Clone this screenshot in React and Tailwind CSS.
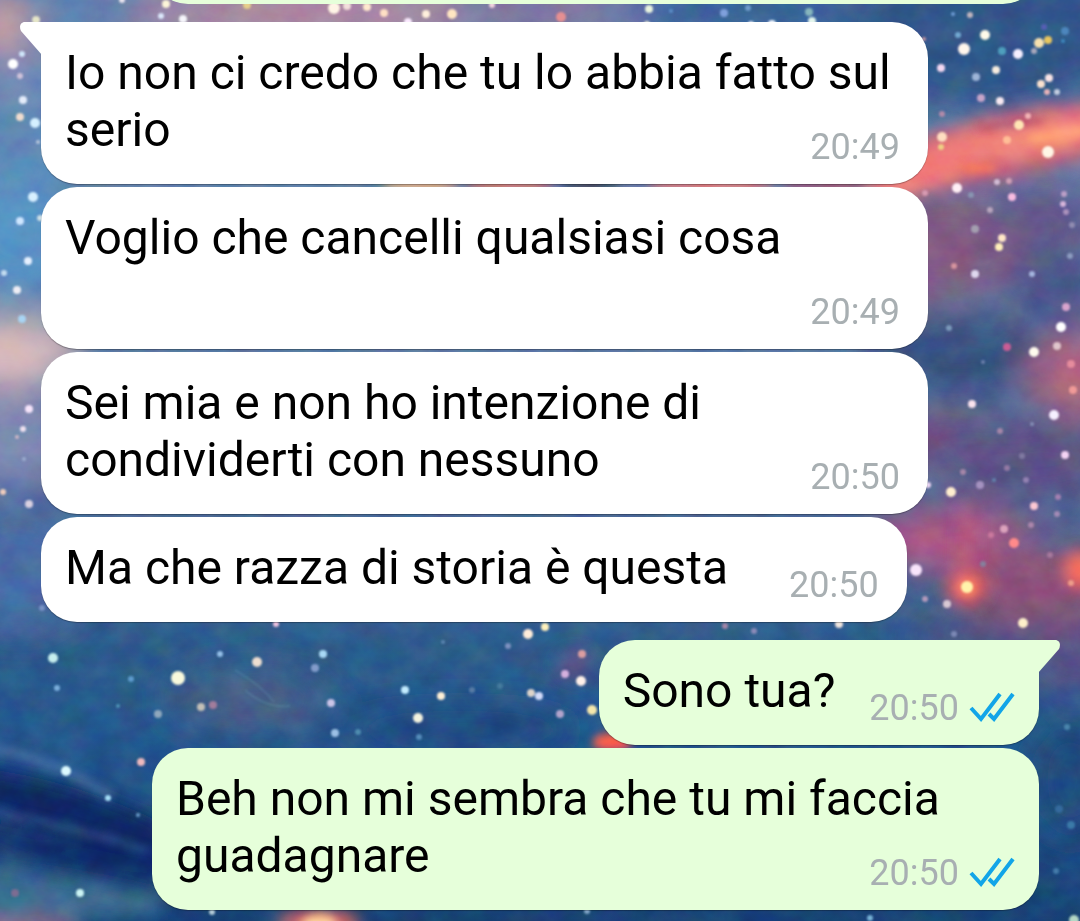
import React from 'react';

const messages = [
  { id: 1, text: 'Io non ci credo che tu lo abbia fatto sul serio', time: '20:49', tail: true },
  { id: 2, text: 'Voglio che cancelli qualsiasi cosa', time: '20:49' },
  { id: 3, text: 'Sei mia e non ho intenzione di condividerti con nessuno', time: '20:50' },
  { id: 4, text: 'Ma che razza di storia è questa', time: '20:50' },
  { id: 5, text: 'Sono tua?', time: '20:50', mine: true, tail: true },
  { id: 6, text: 'Beh non mi sembra che tu mi faccia guadagnare', time: '20:50', mine: true },
];

// x, y, radius, colour
const stars = [
  [122, 0, 3, '#e8e4ee'], [166, 4, 4, '#fdf5d8'], [161, 16, 3, '#dbe8fb'], [183, 19, 4, '#f6f6fb'], [36, 20, 4, '#e5e6c8'],
  [247, 5, 4, '#e6cf8a'], [334, 8, 6, '#fff4e6'], [347, 6, 4, '#f3dfdc'], [367, 7, 4, '#ffe9cf'], [384, 13, 4, '#ffe0c4'],
  [408, 22, 4, '#fbeaff'], [426, 14, 4, '#fff0dc'], [452, 14, 5, '#ffe6c2'], [492, 5, 3, '#f3d3df'], [561, 17, 5, '#e58f92'],
  [649, 9, 4, '#e9f3df'], [647, 24, 3, '#e6ead2'], [671, 11, 2, '#5b8fc9'], [724, 13, 4, '#7fa0dc'], [748, 8, 3, '#6f9ccc'],
  [751, 24, 3, '#dfe3f3'], [772, 24, 4, '#f0f6ff'], [809, 12, 4, '#86b6bd'], [812, 21, 4, '#e3f5ec'],
  [22, 54, 3, '#cfe6fa'], [13, 64, 5, '#fff'], [20, 76, 3, '#cfc2da'], [23, 100, 4, '#e4ecfa'], [20, 117, 4, '#f1ddcf'],
  [35, 123, 5, '#d5f0ff'], [38, 142, 2, '#b9c7dc'], [33, 197, 5, '#d8f0ff'], [20, 221, 4, '#cfe6ff'], [40, 218, 3, '#cfe0e6'],
  [28, 261, 4, '#e6f0ff'], [4, 273, 3, '#c3dcf0'], [17, 290, 4, '#efeef4'], [22, 319, 4, '#a8d4f3'], [29, 409, 4, '#f6e4fa'],
  [23, 429, 3, '#f0e2f0'], [17, 437, 2, '#cfb7c6'], [24, 459, 2, '#9eaed0'], [3, 492, 3, '#f0cdbd'], [29, 504, 4, '#d9d0e1'],
  [953, 14, 2, '#6f9ed6'], [970, 15, 3, '#c0b5be'], [985, 35, 5, '#fffbea'], [964, 49, 6, '#fff6ec'], [958, 35, 3, '#72a9d2'],
  [1018, 54, 5, '#f5efff'], [1039, 43, 5, '#f7e1af'], [1048, 40, 4, '#e8c65f'], [1034, 51, 3, '#a9a8bc'], [1065, 31, 4, '#4e86bd'],
  [1044, 27, 3, '#565fb4'], [1063, 41, 2, '#3f8abf'],
  [941, 68, 4, '#f4d8f2'], [996, 70, 4, '#f8eee0'], [1002, 51, 4, '#4f9fbd'], [976, 77, 4, '#9eb5d8'], [1049, 78, 4, '#f9e4e6'],
  [1041, 84, 4, '#fae2cf'], [1057, 92, 3, '#c4cee0'], [1047, 92, 3, '#e7b3b9'], [981, 98, 4, '#c6a4c8'], [1000, 101, 4, '#f8e9f2'],
  [942, 114, 3, '#b18aa9'], [924, 39, 2, '#c896a0'], [1028, 116, 3, '#f2b3b5'], [1019, 125, 5, '#ffe6b5'], [942, 137, 5, '#ffdec1'],
  [941, 147, 3, '#eed084'], [1007, 140, 4, '#ffbe97'], [1048, 152, 6, '#fff6e6'], [957, 188, 5, '#fff0f6'], [997, 182, 3, '#d2bdd5'],
  [1009, 181, 3, '#cf9fb5'], [1012, 197, 4, '#f8bce0'], [925, 193, 3, '#d79bb2'], [971, 195, 3, '#8894b1'], [990, 210, 3, '#b7a5bd'],
  [1064, 194, 3, '#bca0c7'], [1063, 204, 3, '#d7b5da'], [1066, 212, 3, '#ab91bb'], [975, 229, 4, '#a49fb0'], [1002, 238, 4, '#ffe7c6'],
  [999, 247, 4, '#fff0ba'], [1072, 225, 3, '#8f8bb0'], [1070, 256, 3, '#8b9cc0'], [954, 266, 3, '#d6949f'], [975, 274, 4, '#dfd8ef'],
  [1032, 274, 3, '#a5b5df'], [1066, 307, 4, '#d9a4cd'], [949, 328, 3, '#7b9aba'], [1061, 327, 5, '#fff'], [1034, 352, 5, '#fffbee'],
  [1057, 346, 4, '#e0c6cc'], [1007, 347, 4, '#c95d95'], [1071, 364, 4, '#e58c9d'], [1073, 390, 4, '#f09a98'], [983, 362, 2, '#6d82ac'],
  [972, 404, 4, '#fbe3ee'], [1054, 415, 5, '#f6f0ff'], [1032, 424, 2, '#8590b8'], [1000, 431, 3, '#a586a8'], [1065, 455, 4, '#f4d4f4'],
  [1022, 456, 3, '#7f79a1'], [963, 472, 3, '#a586a8'], [1007, 468, 3, '#9479a4'], [1026, 480, 3, '#9382b2'], [928, 485, 3, '#eed8f7'],
  [951, 492, 5, '#ffeecf'], [980, 485, 4, '#a592c0'], [994, 480, 2, '#6283ad'], [1034, 506, 4, '#fbc8d3'], [1058, 497, 3, '#a480b1'],
  [1057, 514, 3, '#a48ab6'], [1031, 525, 3, '#ac86ac'], [1004, 529, 4, '#dca3bd'], [991, 535, 3, '#ca789e'], [1014, 543, 5, '#ff8a8a'],
  [983, 564, 3, '#86809c'], [916, 570, 6, '#f8e4fb'], [967, 587, 6, '#fff3ab'], [947, 604, 4, '#d8c9d4'], [925, 599, 3, '#b39abb'],
  [1023, 623, 5, '#fff0ca'], [1071, 583, 3, '#ee9e8a'], [1050, 555, 3, '#a6789c'], [839, 624, 4, '#f1e6df'],
  [954, 634, 3, '#7d88b5'], [725, 626, 3, '#a586a8'], [754, 631, 3, '#8c8ab8'],
  [42, 608, 3, '#7792c4'], [53, 658, 5, '#c6eeee'], [57, 688, 3, '#7baedc'], [131, 679, 3, '#5e9bce'], [178, 678, 7, '#f8f9dc'],
  [220, 654, 3, '#94bfe8'], [257, 662, 5, '#efdfd1'], [276, 624, 3, '#f0c3e1'], [315, 668, 4, '#839cca'], [201, 707, 4, '#c4c0b7'],
  [213, 705, 4, '#a17d9c'], [158, 714, 4, '#8fa8bd'], [118, 706, 2, '#4f96b7'], [141, 762, 4, '#eeb9be'], [66, 771, 5, '#dcfaff'],
  [108, 798, 3, '#a6def7'], [138, 815, 2, '#6a9cca'], [80, 893, 4, '#ccf4f4'], [212, 912, 3, '#b5cdd9'], [15, 893, 4, '#7d6d92'],
  [323, 654, 4, '#a9d9f5'], [331, 703, 4, '#ccc5e8'], [335, 733, 4, '#9cc0e5'], [358, 732, 3, '#4f8baf'],
  [405, 690, 4, '#c3ecff'], [441, 696, 4, '#fff0d6'], [418, 718, 5, '#f4f3df'], [419, 737, 3, '#548cba'], [443, 642, 2, '#5b87b3'],
  [508, 646, 3, '#7e91c1'], [472, 690, 3, '#587ca5'], [500, 686, 3, '#457b9d'], [528, 634, 5, '#ffedda'], [545, 627, 4, '#fff2bd'],
  [582, 654, 4, '#dc9ea1'], [565, 674, 4, '#d4b0de'], [581, 681, 5, '#fff1e9'], [531, 693, 4, '#ddd4ca'], [539, 696, 4, '#d3dcfb'],
  [560, 714, 4, '#b3a4cc'], [592, 710, 5, '#f5e7ab'], [1067, 727, 3, '#4b85ad'], [1059, 809, 4, '#356a9d'], [1071, 825, 4, '#3b7aa8'],
  [1056, 871, 3, '#457caa'], [1074, 920, 5, '#b4d8c4'], [870, 918, 3, '#77b3d6'], [587, 911, 3, '#83a7ca'],
];

function Cloud({ cx, cy, rx, ry, fill, turn = 0, opacity = 1 }) {
  return <ellipse cx={cx} cy={cy} rx={rx} ry={ry} fill={fill} opacity={opacity} transform={`rotate(${turn} ${cx} ${cy})`} />;
}

function Galaxy() {
  return (
    <svg className="fixed inset-0 h-full w-full" viewBox="0 0 1080 921" preserveAspectRatio="xMidYMid slice" aria-hidden="true">
      <defs>
        <linearGradient id="sky" x1="0" y1="0" x2="0" y2="1">
          <stop offset="0" stopColor="#5e7fae" />
          <stop offset="0.3" stopColor="#5f7fa8" />
          <stop offset="0.6" stopColor="#456594" />
          <stop offset="0.7" stopColor="#2a5a8a" />
          <stop offset="0.8" stopColor="#22558c" />
          <stop offset="1" stopColor="#164073" />
        </linearGradient>
        <filter id="soft" x="-50%" y="-50%" width="200%" height="200%"><feGaussianBlur stdDeviation="18" /></filter>
        <filter id="mid" x="-50%" y="-50%" width="200%" height="200%"><feGaussianBlur stdDeviation="8" /></filter>
        <filter id="fine" x="-50%" y="-50%" width="200%" height="200%"><feGaussianBlur stdDeviation="4" /></filter>
        <filter id="glow" x="-5%" y="-5%" width="110%" height="110%"><feGaussianBlur stdDeviation="1.3" /></filter>
        <filter id="dust" x="0" y="0" width="100%" height="100%" colorInterpolationFilters="sRGB">
          <feTurbulence type="fractalNoise" baseFrequency="0.035 0.045" numOctaves="5" seed="8" />
          <feColorMatrix values="1.4 0 0 0 -0.1  0 1.4 0 0 -0.1  0 0 1.4 0 -0.1  0 0 0 0 1" />
        </filter>
      </defs>
      <rect width="1080" height="921" fill="url(#sky)" />
      <g filter="url(#soft)">
        <Cloud cx={0} cy={25} rx={34} ry={30} fill="#cf9ba5" />
        <Cloud cx={25} cy={90} rx={30} ry={40} fill="#7688b6" />
        <Cloud cx={20} cy={150} rx={60} ry={50} fill="#5b87b5" />
        <Cloud cx={15} cy={235} rx={60} ry={60} fill="#5592c4" />
        <Cloud cx={5} cy={352} rx={75} ry={36} fill="#dcbabc" />
        <Cloud cx={10} cy={440} rx={60} ry={45} fill="#8087b3" />
        <Cloud cx={20} cy={570} rx={70} ry={60} fill="#476aa4" />
        <Cloud cx={310} cy={12} rx={190} ry={26} fill="#b78a9f" />
        <Cloud cx={550} cy={10} rx={90} ry={26} fill="#80749c" />
        <Cloud cx={760} cy={10} rx={130} ry={26} fill="#2f5b96" />
        <Cloud cx={990} cy={30} rx={150} ry={85} fill="#2f5488" />
        <Cloud cx={940} cy={245} rx={90} ry={55} fill="#80597f" />
        <Cloud cx={1040} cy={220} rx={60} ry={35} fill="#625486" />
        <Cloud cx={1060} cy={290} rx={50} ry={40} fill="#44548a" />
        <Cloud cx={960} cy={355} rx={90} ry={42} fill="#364f7e" />
        <Cloud cx={1080} cy={375} rx={50} ry={42} fill="#b0607c" />
        <Cloud cx={940} cy={440} rx={60} ry={26} fill="#764c7a" />
        <Cloud cx={1030} cy={460} rx={90} ry={42} fill="#584f82" />
        <Cloud cx={950} cy={540} rx={80} ry={32} fill="#b05282" />
        <Cloud cx={1040} cy={585} rx={90} ry={42} fill="#8a5178" />
        <Cloud cx={1000} cy={636} rx={100} ry={14} fill="#584f7e" />
        <Cloud cx={1075} cy={660} rx={45} ry={36} fill="#565084" />
        <Cloud cx={1070} cy={780} rx={40} ry={60} fill="#1d4a7c" />
        <Cloud cx={250} cy={700} rx={80} ry={26} fill="#4b5f84" />
        <Cloud cx={460} cy={730} rx={120} ry={20} fill="#1b457c" />
      </g>
      <g filter="url(#mid)">
        <Cloud cx={1010} cy={145} rx={145} ry={34} turn={-12} fill="#b85c7c" />
        <Cloud cx={1025} cy={139} rx={120} ry={20} turn={-10} fill="#f08078" />
        <Cloud cx={935} cy={167} rx={50} ry={22} turn={-24} fill="#f07878" />
        <Cloud cx={967} cy={587} rx={20} ry={18} fill="#f65c5a" opacity={0.85} />
        <Cloud cx={1080} cy={570} rx={16} ry={18} fill="#ff6a58" />
        <Cloud cx={967} cy={545} rx={6} ry={45} fill="#cf5a78" opacity={0.7} />
        <Cloud cx={319} cy={922} rx={42} ry={10} fill="#ff6f60" />
        <Cloud cx={575} cy={665} rx={20} ry={16} fill="#6b4c80" opacity={0.7} />
        <path d="M-20 768 Q70 778 160 822 L170 878 Q80 850 -20 808Z" fill="#0a2762" />
        <path d="M-20 820 Q70 850 150 858 L160 885 Q60 875 -20 838Z" fill="#0f2c68" />
        <path d="M-20 862 Q70 878 160 896 L160 915 L-20 921Z" fill="#37698f" />
        <Cloud cx={20} cy={924} rx={60} ry={8} fill="#8a6d8b" />
      </g>
      <g filter="url(#fine)">
        <Cloud cx={980} cy={168} rx={18} ry={5} fill="#fb7a58" />
        <Cloud cx={1060} cy={134} rx={36} ry={7} turn={-8} fill="#ffa078" />
        <Cloud cx={1010} cy={124} rx={36} ry={3} turn={-6} fill="#a84b68" />
        <Cloud cx={967} cy={587} rx={9} ry={9} fill="#ff8858" />
        <Cloud cx={319} cy={924} rx={18} ry={9} fill="#ffd598" />
        <Cloud cx={612} cy={742} rx={20} ry={9} fill="#ff5e4c" />
        <Cloud cx={420} cy={185} rx={40} ry={6} fill="#e8b184" />
        <Cloud cx={510} cy={185} rx={45} ry={6} fill="#d77773" />
        <Cloud cx={590} cy={185} rx={30} ry={6} fill="#45455c" />
        <Cloud cx={710} cy={185} rx={65} ry={6} fill="#ec7c7c" />
        <Cloud cx={830} cy={185} rx={50} ry={6} fill="#a0527a" />
        <Cloud cx={890} cy={185} rx={28} ry={6} fill="#f07a78" />
      </g>
      <path d="M-10 748 Q50 758 112 796" stroke="#6f92c0" strokeWidth="9" fill="none" opacity="0.4" filter="url(#fine)" />
      <path d="M-10 810 Q70 825 150 852" stroke="#3c62a0" strokeWidth="6" fill="none" opacity="0.6" filter="url(#fine)" />
      <path d="M245 690 Q265 708 290 706 M235 670 Q262 686 274 702" stroke="#6291ac" strokeWidth="2" fill="none" opacity="0.35" filter="url(#glow)" />
      <rect className="mix-blend-soft-light" width="1080" height="921" filter="url(#dust)" opacity="0.2" />
      <g filter="url(#glow)">
        {stars.map(([x, y, r, fill]) => (
          <circle key={`${x}-${y}`} cx={x} cy={y} r={r} fill={fill} />
        ))}
      </g>
    </svg>
  );
}

function Ticks() {
  return (
    <svg className="h-8 w-12" viewBox="0 0 48 32" fill="none" stroke="#12a5e8" strokeWidth="4" role="img" aria-label="Letto">
      <path d="M2 16 L12 27 L31 2" />
      <path d="M20 22 L25 27 L44 2" />
    </svg>
  );
}

function Tail({ mine }) {
  return (
    <svg
      className={mine ? 'absolute top-0 -right-[21px] h-8 w-[22px] -scale-x-100' : 'absolute top-0 -left-[21px] h-8 w-[22px]'}
      viewBox="0 0 22 32"
      aria-hidden="true"
    >
      <path d="M22 0 H5 C0 0 -1 5 1 9 L22 33Z" fill={mine ? '#e6ffda' : '#fff'} />
    </svg>
  );
}

function Message({ text, time, mine, tail }) {
  const side = mine ? 'self-end bg-[#e6ffda] pr-[22px]' : 'self-start bg-white pr-7';
  const corner = !tail ? '' : mine ? 'rounded-tr-none mt-[15px]' : 'rounded-tl-none';

  return (
    <li className={`relative w-fit max-w-[min(100%,887px)] rounded-[36px] pt-[22px] pb-[19px] pl-6 shadow-[0_1px_1px_rgba(0,0,0,0.3)] ${side} ${corner}`}>
      {tail && <Tail mine={mine} />}
      {/* the time floats beside the last line, or drops below it when there is no room */}
      <div className="flow-root text-[48px] leading-[57px] text-black">
        {text}
        <div className={`float-right mt-7 flex items-center gap-[10px] text-[36px] leading-[36px] text-[#a8afb2] ${mine ? 'ml-[34px]' : 'ml-[61px]'}`}>
          <time>{time}</time>
          {mine && <Ticks />}
        </div>
      </div>
    </li>
  );
}

export default function App() {
  return (
    <main className="relative min-h-screen overflow-hidden font-['Roboto',sans-serif]">
      <Galaxy />
      <div className="relative px-[41px]">
        {/* end of the previous message, scrolled out of view */}
        <div className="ml-auto h-1 w-[887px] max-w-full overflow-hidden">
          <div className="-mt-[68px] h-[72px] rounded-[36px] bg-[#e6ffda]" />
        </div>
        <ul className="mt-[18px] flex flex-col gap-[3px]">
          {messages.map(({ id, ...message }) => (
            <Message key={id} {...message} />
          ))}
        </ul>
      </div>
    </main>
  );
}
